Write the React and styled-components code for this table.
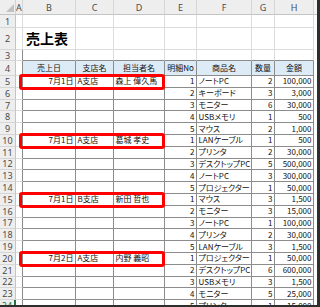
import React from 'react'
import styled, { createGlobalStyle } from 'styled-components'

const COLS = '16px 7px 53px 38px 51px 32px 55px 23px 39px 1fr'
const LETTERS = ['A', 'B', 'C', 'D', 'E', 'F', 'G', 'H']
const HEADS = ['売上日', '支店名', '担当者名', '明細No', '商品名', '数量', '金額']

const orders = [
  { date: '7月1日', branch: 'A支店', person: '森上 偉久馬', items: [
    ['ノートPC', 2, '100,000'], ['キーボード', 3, '3,000'], ['モニター', 6, '30,000'],
    ['USBメモリ', 1, '500'], ['マウス', 2, '1,000'] ] },
  { date: '7月1日', branch: 'A支店', person: '葛城 孝史', items: [
    ['LANケーブル', 1, '500'], ['プリンタ', 2, '30,000'], ['デスクトップPC', 5, '500,000'],
    ['ノートPC', 3, '300,000'], ['プロジェクター', 1, '50,000'] ] },
  { date: '7月1日', branch: 'B支店', person: '新田 哲也', items: [
    ['マウス', 3, '1,500'], ['モニター', 3, '15,000'], ['ノートPC', 1, '100,000'],
    ['プリンタ', 2, '30,000'], ['LANケーブル', 3, '1,500'] ] },
  { date: '7月2日', branch: 'A支店', person: '内野 義昭', items: [
    ['プロジェクター', 1, '50,000'], ['デスクトップPC', 6, '600,000'], ['USBメモリ', 3, '1,500'],
    ['モニター', 5, '25,000'], ['プリンタ', 1, '15,000'] ] },
]

const GlobalStyle = createGlobalStyle`
  body {
    margin: 0;
    background: #ffffff;
  }
`

function App() {
  const lines = []
  orders.forEach((o) => {
    o.items.forEach((it, i) => {
      lines.push({ first: i === 0, o, no: i + 1, item: it[0], qty: it[1], amount: it[2] })
    })
  })

  return (
    <>
      <GlobalStyle />
      <Sheet>
        <Row $h={15}>
          <Corner><Triangle /></Corner>
          {LETTERS.map((l) => <ColHead key={l}>{l}</ColHead>)}
          <ColHead $blank />
        </Row>

        <Row $h={13}>
          <RowHead>1</RowHead>
          {LETTERS.map((l) => <Cell key={l} />)}
          <Spare />
        </Row>

        <Row $h={22}>
          <RowHead>2</RowHead>
          <Cell />
          <Cell><Title>売上表</Title></Cell>
          {LETTERS.slice(2).map((l) => <Cell key={l} />)}
          <Spare />
        </Row>

        <Row $h={11}>
          <RowHead>3</RowHead>
          <Cell $r />
          {LETTERS.slice(1).map((l) => <Cell key={l} $b />)}
          <Spare />
        </Row>

        <Row $h={15}>
          <RowHead>4</RowHead>
          <Cell $r />
          {HEADS.map((h) => <Cell key={h} $r $b $head $align="center">{h}</Cell>)}
          <Spare />
        </Row>

        {lines.map((ln, i) => (
          <Row key={i} $h={11.8} $mark={ln.first}>
            <RowHead $sel={i === 19}>{i + 5}</RowHead>
            <Cell $r />
            <Cell $r $b $align="flex-end">{ln.first ? ln.o.date : ''}</Cell>
            <Cell $r $b>{ln.first ? ln.o.branch : ''}</Cell>
            <Cell $r $b>{ln.first ? ln.o.person : ''}</Cell>
            <Cell $r $b $align="flex-end">{ln.no}</Cell>
            <Cell $r $b>{ln.item}</Cell>
            <Cell $r $b $align="flex-end">{ln.qty}</Cell>
            <Cell $r $b $align="flex-end">{ln.amount}</Cell>
            <Spare />
          </Row>
        ))}
      </Sheet>
    </>
  )
}

export default App


const Sheet = styled.div`
  width: 317px;
  height: 305px;
  overflow: hidden;
  border-right: 3px solid #2e2e2e;
  border-bottom: 2px solid #2e2e2e;
  display: flex;
  flex-direction: column;
  background: #ffffff;
`

const Row = styled.div`
  position: relative;
  flex: none;
  display: grid;
  grid-template-columns: ${COLS};
  height: ${(p) => p.$h}px;

  ${(p) => p.$mark && `
    &::after {
      content: '';
      position: absolute;
      left: 19px;
      top: -2px;
      width: 146px;
      height: 16px;
      box-sizing: border-box;
      border: 3px solid #ff0000;
      border-radius: 3px;
      z-index: 2;
    }
  `}
`

const Corner = styled.div`
  background: #eeeeee;
  border-right: 1px solid #d2d2d2;
  border-bottom: 1px solid #c4c4c4;
  display: flex;
  justify-content: flex-end;
  align-items: flex-end;
  padding: 0 1px 2px 0;
`

const Triangle = styled.div`
  width: 0;
  height: 0;
  border-left: 8px solid transparent;
  border-bottom: 8px solid #c2c2c2;
`

const ColHead = styled.div`
  background: ${(p) => (p.$blank ? '#f4f4f4' : '#eeeeee')};
  border-right: ${(p) => (p.$blank ? 'none' : '1px solid #d6d6d6')};
  border-bottom: 1px solid #c4c4c4;
  display: flex;
  align-items: center;
  justify-content: center;
  font-family: "Noto Sans", "Liberation Sans", sans-serif;
  font-size: 9px;
  color: #4a4a4a;
  overflow: hidden;
`

const RowHead = styled.div`
  background: #eeeeee;
  border-right: ${(p) => (p.$sel ? '2px solid #217346' : '1px solid #c4c4c4')};
  border-bottom: 1px solid #d6d6d6;
  display: flex;
  align-items: center;
  justify-content: center;
  font-family: "Noto Sans", "Liberation Sans", sans-serif;
  font-size: 9px;
  color: ${(p) => (p.$sel ? '#217346' : '#4a4a4a')};
  overflow: hidden;
`

const Cell = styled.div`
  box-sizing: border-box;
  min-width: 0;
  border-right: 1px solid ${(p) => (p.$r ? '#8c8c8c' : '#dcdcdc')};
  border-bottom: 1px solid ${(p) => (p.$b ? '#8c8c8c' : '#dcdcdc')};
  background: ${(p) => (p.$head ? '#ddebf7' : '#ffffff')};
  display: flex;
  align-items: center;
  justify-content: ${(p) => p.$align || 'flex-start'};
  padding: 0 1.5px;
  font-family: "Noto Sans CJK JP", "Noto Sans", sans-serif;
  font-feature-settings: "palt" 1;
  font-size: 8px;
  line-height: 1;
  color: #111111;
  white-space: nowrap;
  overflow: visible;
`

const Spare = styled.div`
  background: #ffffff;
`

const Title = styled.div`
  align-self: flex-end;
  padding: 0 0 4px 1.5px;
  font-family: "Noto Sans CJK JP", sans-serif;
  font-size: 14px;
  font-weight: 700;
  color: #000000;
`
